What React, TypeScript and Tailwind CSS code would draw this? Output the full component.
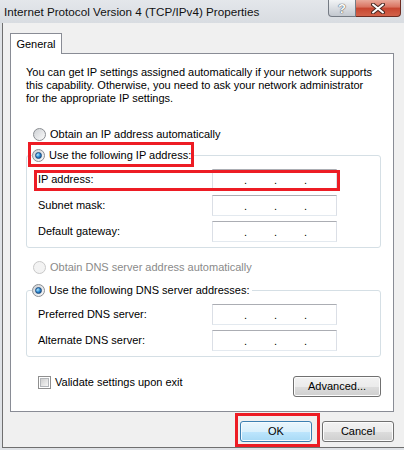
import clsx from 'clsx'

function Radio({ checked, disabled }: { checked?: boolean; disabled?: boolean }) {
  return (
    <span
      className={clsx(
        'flex h-[13px] w-[13px] shrink-0 items-center justify-center rounded-full border',
        disabled
          ? 'border-[#c8c8c8] bg-[#f3f3f3]'
          : 'border-[#8a8d92] bg-linear-to-br from-[#cdd0d4] to-[#fbfbfb]',
      )}
    >
      {checked && (
        <span className="h-[7px] w-[7px] rounded-full border border-[#1c4a7e] bg-radial-[at_35%_35%] from-[#b4e8ff] via-[#2b8ad2] to-[#0b3c78]" />
      )}
    </span>
  )
}

function Checkbox() {
  return (
    <span className="flex h-[13px] w-[13px] shrink-0 border border-[#8f8f8f] bg-white p-px">
      <span className="flex-1 border border-[#b3b6ba] bg-linear-to-br from-[#cfcfcf] to-[#f6f6f6]" />
    </span>
  )
}

function IpField() {
  return (
    <div className="flex h-[21px] w-[125px] items-center border border-[#dbdfe6] border-t-[#abadb3] border-b-[#e3e9ef] bg-white pl-[4px] pt-[2px]">
      {[0, 1, 2].map((i) => (
        <span key={i} className="w-[30px] text-right">
          .
        </span>
      ))}
    </div>
  )
}

function IpRow({ label }: { label: string }) {
  return (
    <div className="flex items-center">
      <span className="w-[174px]">{label}</span>
      <IpField />
    </div>
  )
}

function WinButton({
  children,
  primary,
  className,
}: {
  children: React.ReactNode
  primary?: boolean
  className?: string
}) {
  return (
    <button
      className={clsx(
        'flex h-[21px] items-center justify-center rounded-[3px] border',
        primary
          ? 'border-[#3c7fb1] bg-[linear-gradient(#eaf6fd,#d9f0fc_50%,#bee6fd_50%,#a7d9f5)] shadow-[inset_0_0_0_1px_#f4fbff]'
          : 'border-[#707070] bg-[linear-gradient(#f2f2f2,#ebebeb_50%,#dddddd_50%,#cfcfcf)] shadow-[inset_0_0_0_1px_#fcfcfc]',
        className,
      )}
    >
      {children}
    </button>
  )
}

function GroupBox({
  header,
  children,
  className,
}: {
  header: React.ReactNode
  children: React.ReactNode
  className?: string
}) {
  return (
    <div className={clsx('rounded-[3px] border border-[#d5dfe5] pb-[5px] pl-[11px]', className)}>
      <div className="-mt-[9px] ml-[-6px] flex h-[17px] w-fit items-center gap-[4px] bg-white pr-[2px]">
        {header}
      </div>
      <div className="mt-[5px] flex flex-col gap-[5px]">{children}</div>
    </div>
  )
}

export default function App() {
  return (
    <div className="relative h-[450px] w-[404px] overflow-hidden bg-[#dfe2e6] font-['Liberation_Sans',Arial,sans-serif] text-[11px] leading-[13px] text-black">
      {/* caption */}
      <div className="flex h-[23px] bg-linear-to-b from-[#e4e7eb] to-[#d8dce1]">
        <span className="whitespace-nowrap pl-[4px] pt-[4px] text-[11.7px] leading-[15px] text-[#111]">
          Internet Protocol Version 4 (TCP/IPv4) Properties
        </span>
        <div className="ml-auto mr-[3px] flex h-[17px]">
          <span className="flex w-[28px] items-center justify-center rounded-bl-[4px] border border-t-0 border-[#757b84] bg-linear-to-b from-[#f2f4f6] to-[#c3c8cf] text-[13px] font-bold text-white [text-shadow:0_0_1px_#3a3f47,0_0_1px_#3a3f47]">
            ?
          </span>
          <span className="flex w-[45px] items-center justify-center rounded-br-[4px] border border-l-0 border-t-0 border-[#6e2c22] bg-[linear-gradient(#e9a99a,#d9725f_45%,#c7452f_50%,#d2624a)]">
            <svg width="14" height="11" viewBox="0 0 14 11">
              <path d="M2 1.5 L12 9.5 M12 1.5 L2 9.5" stroke="#4a2a24" strokeWidth="4" strokeLinecap="round" />
              <path d="M2 1.5 L12 9.5 M12 1.5 L2 9.5" stroke="#ffffff" strokeWidth="2" strokeLinecap="round" />
            </svg>
          </span>
        </div>
      </div>

      {/* body */}
      <div className="ml-[2px] flex h-[425px] flex-col border-b border-l border-[#6f6f6f] bg-[#f0f0f0] pl-[7px] pr-[10px] pt-[10px]">
        <div className="relative z-10 -mb-px flex h-[21px] w-[52px] items-center justify-center border border-b-0 border-[#898c95] bg-white">
          General
        </div>
        <div className="h-[359px] border border-[#898c95] bg-white pl-[15px] pr-[12px] pt-[12px]">
          <p className="whitespace-nowrap">
            You can get IP settings assigned automatically if your network supports
            <br />
            this capability. Otherwise, you need to ask your network administrator
            <br />
            for the appropriate IP settings.
          </p>

          <div className="ml-[7px] mt-[21px] flex h-[17px] items-center gap-[4px]">
            <Radio />
            <span>Obtain an IP address automatically</span>
          </div>

          <GroupBox
            className="mt-[12px]"
            header={
              <>
                <Radio checked />
                <span>Use the following IP address:</span>
              </>
            }
          >
            <IpRow label="IP address:" />
            <IpRow label="Subnet mask:" />
            <IpRow label="Default gateway:" />
          </GroupBox>

          <div className="ml-[7px] mt-[11px] flex h-[17px] items-center gap-[4px] text-[#8a8a8a]">
            <Radio disabled />
            <span>Obtain DNS server address automatically</span>
          </div>

          <GroupBox
            className="mt-[14px]"
            header={
              <>
                <Radio checked />
                <span>Use the following DNS server addresses:</span>
              </>
            }
          >
            <IpRow label="Preferred DNS server:" />
            <IpRow label="Alternate DNS server:" />
          </GroupBox>

          <div className="mt-[19px] flex items-start justify-between">
            <div className="ml-[12px] flex items-center gap-[4px]">
              <Checkbox />
              <span>Validate settings upon exit</span>
            </div>
            <WinButton className="w-[88px]">Advanced...</WinButton>
          </div>
        </div>

        <div className="mt-[9px] flex justify-end gap-[10px]">
          <WinButton primary className="w-[72px]">
            OK
          </WinButton>
          <WinButton className="w-[72px]">Cancel</WinButton>
        </div>
      </div>

      {/* red annotation boxes */}
      <div className="absolute left-[28px] top-[142px] h-[25px] w-[166px] border-[3px] border-[#ed1c24]" />
      <div className="absolute left-[34px] top-[170px] h-[21px] w-[306px] border-[3px] border-[#ed1c24]" />
      <div className="absolute left-[235px] top-[413px] h-[34px] w-[85px] border-[3px] border-[#ed1c24]" />
    </div>
  )
}
